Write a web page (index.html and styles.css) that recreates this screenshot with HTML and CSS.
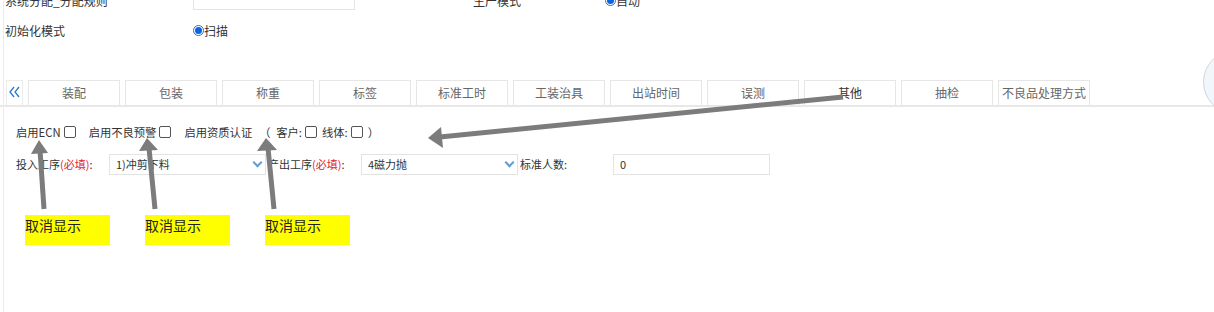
FILE: index.html
```html
<!DOCTYPE html>
<html lang="zh-CN">
<head>
  <meta charset="UTF-8">
  <title>工序配置</title>
  <link rel="stylesheet" href="styles.css">
</head>
<body>

<div class="page">

  <div class="init-rows">
    <div class="init-row">
      <span class="init-label">系统分配_分配规则</span>
      <span class="init-input"></span>
      <span class="init-label second">生产模式</span>
      <span class="radio on"></span><span>自动</span>
    </div>
    <div class="init-row">
      <span class="init-label">初始化模式</span>
      <span class="radio on"></span><span>扫描</span>
    </div>
  </div>

  <div class="tab-bar">
    <span class="tab-toggle">
      <svg width="15" height="16" viewBox="0 0 15 16">
        <path d="M7 3 L3 8 L7 13 M12 3 L8 8 L12 13" fill="none" stroke="#2a7bd0" stroke-width="1.3"/>
      </svg>
    </span>
    <span class="tab">装配</span>
    <span class="tab">包装</span>
    <span class="tab">称重</span>
    <span class="tab">标签</span>
    <span class="tab">标准工时</span>
    <span class="tab">工装治具</span>
    <span class="tab">出站时间</span>
    <span class="tab">误测</span>
    <span class="tab active">其他</span>
    <span class="tab">抽检</span>
    <span class="tab">不良品处理方式</span>
  </div>

  <div class="panel">
    <div class="check-row">
      <span class="check-item">启用ECN<span class="cb"></span></span>
      <span class="check-item">启用不良预警<span class="cb"></span></span>
      <span class="check-item">启用资质认证</span>
      <span class="paren open">（</span>
      <span class="check-item small">客户:<span class="cb"></span></span>
      <span class="check-item small">线体:<span class="cb"></span></span>
      <span class="paren">）</span>
    </div>

    <div class="form-row">
      <span class="form-label">投入工序<em>(必填)</em>:</span>
      <span class="select">1)冲剪下料<i class="chev"></i></span>
      <span class="form-label">产出工序<em>(必填)</em>:</span>
      <span class="select">4磁力抛<i class="chev"></i></span>
      <span class="form-label">标准人数:</span>
      <span class="text-input">0</span>
    </div>

    <div class="note-row">
      <span class="note">取消显示</span>
      <span class="note">取消显示</span>
      <span class="note">取消显示</span>
    </div>
  </div>

  <div class="side-knob"></div>

  <svg class="arrows" width="1214" height="312" viewBox="0 0 1214 312">
    <g stroke="#7c7c7c" stroke-width="5" fill="#7c7c7c">
      <line x1="44" y1="209" x2="40" y2="150"/>
      <polygon stroke="none" points="39,140 31,154 48,153"/>
      <line x1="155" y1="209" x2="149" y2="148"/>
      <polygon stroke="none" points="147,138 139,151 158,150"/>
      <line x1="274" y1="209" x2="268" y2="148"/>
      <polygon stroke="none" points="266,138 257,151 277,150"/>
      <line x1="843" y1="97" x2="440" y2="137"/>
      <polygon stroke="none" points="428,138 441,127 443,148"/>
    </g>
  </svg>

</div>

</body>
</html>
```

FILE: styles.css
```css
body {
  margin: 0;
  font-family: "Noto Sans CJK SC", "Noto Sans", sans-serif;
  font-size: 12px;
  color: #333;
  background: #fff;
}

.page {
  position: relative;
  width: 1214px;
  height: 312px;
  overflow: hidden;
}

.page::before {
  content: "";
  position: absolute;
  left: 3px;
  top: 0;
  bottom: 0;
  border-left: 1px solid #ececec;
}

.init-rows {
  margin-top: -15px;
}

.init-row {
  display: flex;
  align-items: center;
  height: 30px;
  padding-left: 5px;
}

.init-label {
  width: 188px;
}

.init-label.second {
  width: 132px;
}

.init-input {
  width: 162px;
  height: 20px;
  border: 1px solid #e4e4e4;
  box-sizing: border-box;
  margin-right: 118px;
}

.radio {
  width: 11px;
  height: 11px;
  border-radius: 50%;
  border: 1px solid #1a73d9;
  box-sizing: border-box;
  background: #fff;
  position: relative;
}

.radio.on::after {
  content: "";
  position: absolute;
  left: 1px;
  top: 1px;
  width: 7px;
  height: 7px;
  border-radius: 50%;
  background: #0a64e0;
}

.tab-bar {
  display: flex;
  gap: 5px;
  margin-top: 35px;
  padding-left: 6px;
  height: 25px;
  border-bottom: 2px solid #e8e8e8;
}

.tab-toggle {
  width: 15px;
  border: 1px solid #ececec;
  border-bottom: none;
  display: flex;
  align-items: center;
  justify-content: center;
  padding-bottom: 2px;
}

.tab {
  width: 90px;
  border: 1px solid #e6e6e6;
  border-bottom: none;
  color: #666;
  text-align: center;
  line-height: 24px;
}

.tab.active {
  color: #333;
}

.panel {
  padding: 18px 0 0 16px;
}

.check-row {
  display: flex;
  align-items: center;
  height: 14px;
  font-size: 11.3px;
}

.check-item {
  display: flex;
  align-items: center;
  gap: 3px;
  margin-right: 13px;
}

.check-item.small {
  margin-right: 5px;
}

.paren {
  width: 12px;
}

.paren.open {
  margin: 0 0 0 -6px;
  width: 17px;
}

.cb {
  display: inline-block;
  width: 12px;
  height: 12px;
  border: 1px solid #555;
  border-radius: 2px;
  box-sizing: border-box;
}

.form-row {
  display: flex;
  align-items: center;
  margin-top: 14px;
  height: 22px;
  font-size: 11px;
}

.form-label {
  width: 93px;
}

em {
  font-style: normal;
  color: #e0242c;
}

.select,
.text-input {
  position: relative;
  width: 157px;
  height: 21px;
  border: 1px solid #e3e3e3;
  box-sizing: border-box;
  padding-left: 6px;
  line-height: 19px;
  margin-right: 2px;
}

.chev {
  position: absolute;
  right: 4px;
  top: 4px;
  width: 5px;
  height: 5px;
  border-right: 2px solid #5e9fd6;
  border-bottom: 2px solid #5e9fd6;
  transform: rotate(45deg);
}

.note-row {
  display: flex;
  margin-top: 40px;
  padding-left: 9px;
}

.note {
  width: 85px;
  height: 30px;
  background: #ffff00;
  color: #222;
  font-size: 14px;
  line-height: 20px;
  margin-right: 35px;
}

.side-knob {
  position: absolute;
  left: 1203px;
  top: 50px;
  width: 62px;
  height: 62px;
  border-radius: 50%;
  border: 1px solid #cfd6de;
  background: #f1f6fb;
}

.arrows {
  position: absolute;
  left: 0;
  top: 0;
  pointer-events: none;
}
```
